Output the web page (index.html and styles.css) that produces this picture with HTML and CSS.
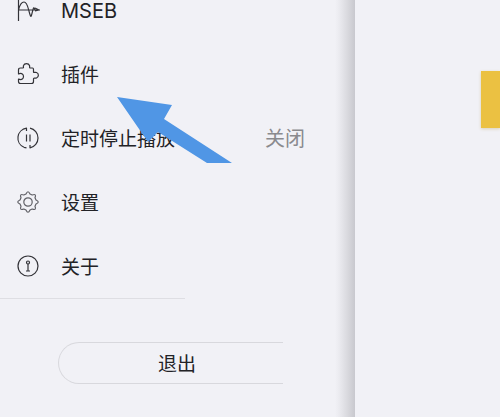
FILE: index.html
```html
<!DOCTYPE html>
<html lang="zh-CN">
<head>
    <meta charset="UTF-8">
    <meta name="viewport" content="width=device-width, initial-scale=1.0">
    <title>菜单</title>
    <link rel="stylesheet" href="styles.css">
</head>
<body>
    <div class="layout">
        <aside class="drawer">
            <nav class="menu">
                <button class="menu-item">
                    <svg class="icon" viewBox="0 0 24 24"><path d="M2.500 1v22M2.500 12H24M2.500 12C4 6 6 4 8 4c4 0 4 8 6.500 14 1 2 2-6 3-8 1-1 1 2 2 2M19 10l4 2-4 1"/></svg>
                    <span class="label label-latin">MSEB</span>
                </button>
                <button class="menu-item">
                    <svg class="icon" viewBox="0 0 24 24"><path d="M2.500 8Q2.500 6 4.500 6H7C8 6 7 4.500 7.500 3.500 8.500 1 12.500 1 13.500 3.500 14 5 13 6 14.500 6H16.500Q17.500 6 17.500 7.500V10C17.500 11 19 10 20.500 10.500 23 11.500 23 15 20.500 16 19 16.500 17.500 15.500 17.500 17V19.500Q17.500 21.500 15.500 21.500H4.500Q2.500 21.500 2.500 19.500V17C6 18.500 7.500 16.500 7.500 14.500S6 10.500 2.500 12Z"/></svg>
                    <span class="label">插件</span>
                </button>
                <button class="menu-item">
                    <svg class="icon" viewBox="0 0 24 24"><path d="M10.500 5V2.200A10 10 0 0 0 8 21.300M14 19v2.800A10 10 0 0 0 14 2.200M10.500 21.800l-2.500-.5M10.500 8.500v7M14 8.500v7"/></svg>
                    <span class="label">定时停止播放</span>
                    <span class="value">关闭</span>
                </button>
                <button class="menu-item">
                    <svg class="icon icon-light" viewBox="0 0 24 24"><circle cx="12" cy="12" r="4.200"/><path d="M10 4Q12 -.5 14 4L16.200 5Q20.800 3.200 19 7.800L20 10Q24.500 12 20 14L19 16.200Q20.800 20.800 16.200 19L14 20Q12 24.500 10 20L7.800 19Q3.200 20.800 5 16.200L4 14Q-.5 12 4 10L5 7.800Q3.200 3.200 7.800 5Z"/></svg>
                    <span class="label">设置</span>
                </button>
                <button class="menu-item">
                    <svg class="icon" viewBox="0 0 24 24"><circle cx="12" cy="12" r="10"/><circle cx="12" cy="8.500" r="1.500"/><path d="M12 10v7M10 17h4"/></svg>
                    <span class="label">关于</span>
                </button>
            </nav>
            <div class="divider"></div>
            <div class="footer">
                <button class="exit-btn">退出</button>
            </div>
        </aside>
        <main class="content">
            <div class="card"></div>
        </main>
    </div>
    <svg class="arrow" viewBox="0 0 116 66" aria-hidden="true"><path d="M1 0L56 8 48 22 116 66H91L42 35 32 45Z"/></svg>
</body>
</html>
```

FILE: styles.css
```css
* {
    margin: 0;
    padding: 0;
    box-sizing: border-box;
}

body {
    font-family: "Noto Sans CJK SC", sans-serif;
    background: #f1f1f6;
    color: #222226;
    overflow: hidden;
}

button {
    font: inherit;
    color: inherit;
    background: none;
    border: none;
    cursor: pointer;
}

.layout {
    display: flex;
    min-height: 100vh;
}

.drawer {
    width: 71%;
    background: linear-gradient(to left, #c8c8ce 0, #dadadf 8px, #ebebf0 16px, #f1f1f6 20px);
}

/* the list is scrolled part of a row */
.menu {
    margin-top: -22px;
}

.menu-item {
    display: flex;
    align-items: center;
    width: 100%;
    height: 64px;
    padding: 0 50px 0 16px;
    font-size: 19px;
    line-height: 28px;
    text-align: left;
}

.icon {
    width: 24px;
    height: 24px;
    margin-right: 21px;
    fill: none;
    stroke: #333338;
    stroke-width: 1.2;
    stroke-linejoin: round;
}

.icon-light {
    stroke: #606066;
}

.label-latin {
    padding-top: 2px;
    font-family: Inter, sans-serif;
    font-size: 20px;
    line-height: 20px;
}

.value {
    margin-left: auto;
    font-size: 20px;
    color: #8a8a8e;
}

.divider {
    width: 52%;
    height: 1px;
    background: #dedee3;
}

.footer {
    padding: 43px 72px 0 58px;
}

.exit-btn {
    width: 100%;
    height: 42px;
    padding-left: 12px;
    font-size: 19px;
    line-height: 28px;
    border: 1px solid #d8d8dd;
    border-right: none;
    border-radius: 21px 0 0 21px;
}

.content {
    flex: 1;
    padding-top: 71px;
}

.card {
    width: 19px;
    height: 57px;
    margin-left: auto;
    background: #ebc142;
    box-shadow: 0 1px 3px #d8d0b8;
}

.arrow {
    position: absolute;
    top: 97px;
    left: 116px;
    width: 116px;
    height: 66px;
    fill: #5096e5;
}
```
